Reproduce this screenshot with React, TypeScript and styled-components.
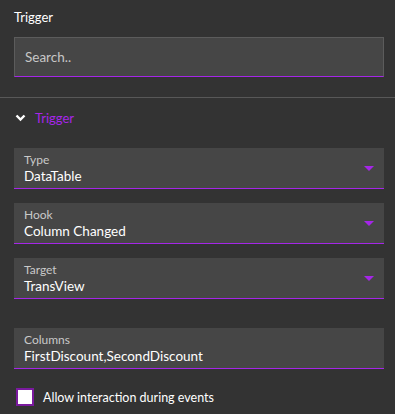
import styled, { createGlobalStyle } from 'styled-components';

const GlobalStyle = createGlobalStyle`
	html, body {
		margin: 0;
		padding: 0;
		background: #333333;
	}
	body {
		font-family: Lato, "Open Sans", sans-serif;
	}
`

const purple = '#a526e8';

type FieldPropsType = {
	label: string
	value: string
	select?: boolean
}

const Field = (props: FieldPropsType) => {
	return (
		<StyledField>
			<div>
				<StyledLabel>{props.label}</StyledLabel>
				<StyledValue>{props.value}</StyledValue>
			</div>
			{props.select && <StyledArrow />}
		</StyledField>
	)
}

export default function App() {
	return (
		<StyledPanel>
			<GlobalStyle />
			<StyledTop>
				<StyledTitle>Trigger</StyledTitle>
				<StyledSearch>Search..</StyledSearch>
			</StyledTop>
			<StyledDivider />
			<StyledSection>
				<StyledHeader>
					<svg width="11" height="8" viewBox="0 0 11 8">
						<polyline points="1.5,1.5 5.5,5.5 9.5,1.5" fill="none" stroke="#ffffff" strokeWidth="2.4" />
					</svg>
					<span>Trigger</span>
				</StyledHeader>
				<StyledFields>
					<Field label="Type" value="DataTable" select />
					<Field label="Hook" value="Column Changed" select />
					<Field label="Target" value="TransView" select />
				</StyledFields>
				<StyledColumns>
					<Field label="Columns" value="FirstDiscount,SecondDiscount" />
				</StyledColumns>
				<StyledCheckRow>
					<StyledBox />
					<span>Allow interaction during events</span>
				</StyledCheckRow>
			</StyledSection>
		</StyledPanel>
	)
}

const StyledPanel = styled.div`
	width: 395px;
	height: 414px;
	background: #333333;
	color: #ffffff;
	overflow: hidden;
`

const StyledTop = styled.div`
	padding: 8px 11px 20px 14px;
`

const StyledTitle = styled.div`
	font-size: 13px;
	line-height: 18px;
	color: #ffffff;
	margin-bottom: 11px;
`

const StyledSearch = styled.div`
	height: 40px;
	box-sizing: border-box;
	display: flex;
	align-items: center;
	padding: 0 10px;
	background: #464646;
	border: 1px solid #5c5c5c;
	border-bottom: 1px solid ${purple};
	font-size: 13.5px;
	color: #c6c6c6;
`

const StyledDivider = styled.div`
	height: 1px;
	background: #585858;
`

const StyledSection = styled.div`
	padding: 12px 11px 0 14px;
`

const StyledHeader = styled.div`
	display: flex;
	align-items: center;
	gap: 9px;
	height: 16px;
	padding-left: 1px;
	font-size: 13px;
	color: ${purple};
	margin-bottom: 22px;
`

const StyledFields = styled.div`
	display: flex;
	flex-direction: column;
	gap: 14px;
`

const StyledField = styled.div`
	display: flex;
	align-items: center;
	justify-content: space-between;
	padding: 5px 10px 3px 10px;
	background: #464646;
	border-bottom: 1px solid ${purple};
`

const StyledLabel = styled.div`
	font-size: 12px;
	line-height: 14px;
	color: #c9c9c9;
`

const StyledValue = styled.div`
	font-size: 13.5px;
	line-height: 18px;
	color: #ffffff;
`

const StyledArrow = styled.div`
	width: 0;
	height: 0;
	border-left: 5px solid transparent;
	border-right: 5px solid transparent;
	border-top: 5px solid ${purple};
	margin-top: -2px;
`

const StyledColumns = styled.div`
	margin-top: 29px;
`

const StyledCheckRow = styled.div`
	display: flex;
	align-items: center;
	gap: 9px;
	margin-top: 19px;
	padding-left: 2px;
	font-size: 12.5px;
	color: #ffffff;
`

const StyledBox = styled.div`
	width: 18px;
	height: 18px;
	box-sizing: border-box;
	background: #ffffff;
	border: 2px solid #7a1a9e;
`
